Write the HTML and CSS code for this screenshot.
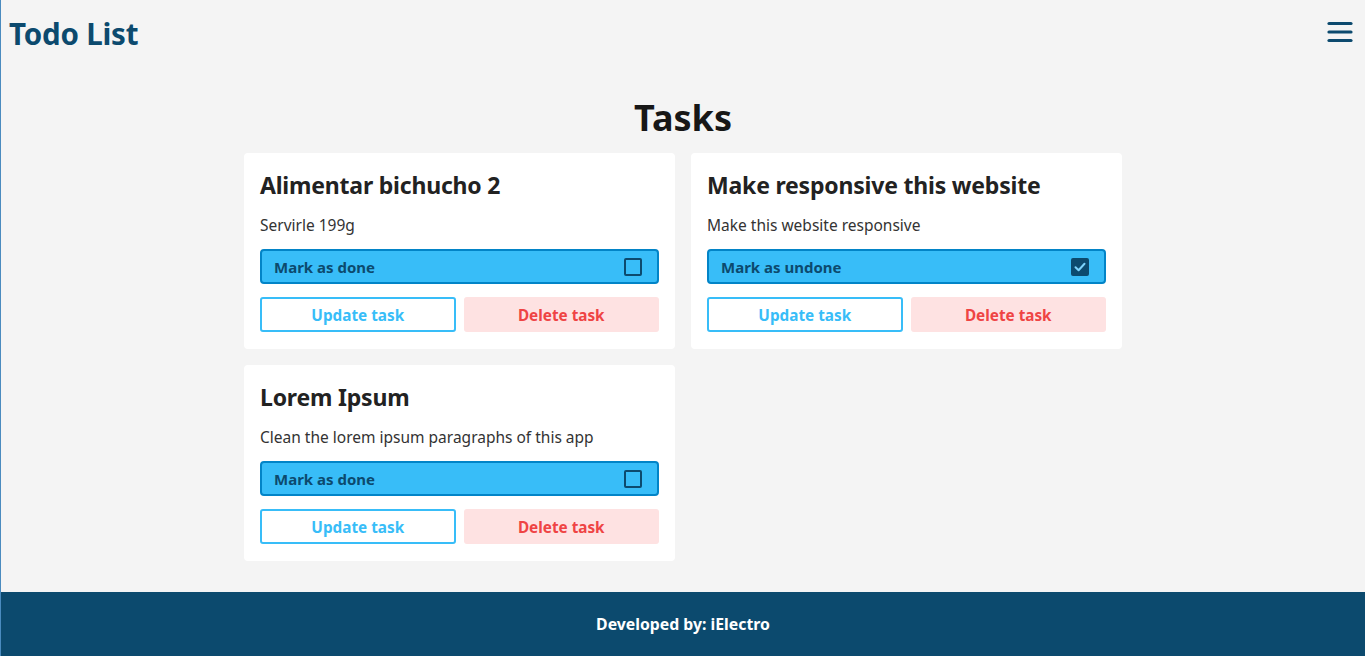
FILE: index.html
```html
<!DOCTYPE html>
<html lang="en">
<head>
<meta charset="utf-8">
<title>Todo List</title>
<link rel="stylesheet" href="styles.css">
</head>
<body>
<div class="page">
  <header class="header">
    <h1 class="logo">Todo List</h1>
    <button class="menu" aria-label="Menu">
      <svg width="26" height="22" viewBox="0 0 26 22"><g stroke="#0c4a6e" stroke-width="3.2" stroke-linecap="round"><line x1="2" y1="2.5" x2="24" y2="2.5"/><line x1="2" y1="11" x2="24" y2="11"/><line x1="2" y1="19.5" x2="24" y2="19.5"/></g></svg>
    </button>
  </header>
  <main class="main">
    <h2 class="title">Tasks</h2>
    <div class="grid">
      <div class="card">
        <h3 class="card-title">Alimentar bichucho 2</h3>
        <p class="card-desc">Servirle 199g</p>
        <label class="mark"><span>Mark as done</span><span class="check"></span></label>
        <div class="actions"><button class="btn update">Update task</button><button class="btn delete">Delete task</button></div>
      </div>
      <div class="card">
        <h3 class="card-title">Make responsive this website</h3>
        <p class="card-desc">Make this website responsive</p>
        <label class="mark"><span>Mark as undone</span><span class="check checked"><svg width="14" height="14" viewBox="0 0 14 14"><path d="M2.5 7.2 L5.6 10.2 L11.5 3.8" fill="none" stroke="#7dd3fc" stroke-width="2" stroke-linecap="round" stroke-linejoin="round"/></svg></span></label>
        <div class="actions"><button class="btn update">Update task</button><button class="btn delete">Delete task</button></div>
      </div>
      <div class="card">
        <h3 class="card-title">Lorem Ipsum</h3>
        <p class="card-desc">Clean the lorem ipsum paragraphs of this app</p>
        <label class="mark"><span>Mark as done</span><span class="check"></span></label>
        <div class="actions"><button class="btn update">Update task</button><button class="btn delete">Delete task</button></div>
      </div>
    </div>
  </main>
  <footer class="footer">Developed by: iElectro</footer>
</div>
</body>
</html>
```
FILE: styles.css
```css
* { box-sizing: border-box; }
html, body { margin: 0; padding: 0; }
body {
  font-family: "Noto Sans", "Open Sans", sans-serif;
  background: #f4f4f4;
  color: #262626;
}
.page {
  min-height: 656px;
  display: flex;
  flex-direction: column;
  border-left: 1px solid #4a8bbf;
}
.header {
  height: 66px;
  display: flex;
  align-items: center;
  justify-content: space-between;
  padding: 0 12px 0 8px;
}
.logo {
  margin: 0;
  font-size: 29.5px;
  font-weight: 700;
  color: #0c4a6e;
  letter-spacing: -0.2px;
}
.menu {
  border: 0;
  background: none;
  padding: 0;
  display: flex;
  margin-top: -2px;
}
.main {
  flex: 1;
  display: flex;
  flex-direction: column;
  align-items: center;
  padding-bottom: 31px;
}
.title {
  margin: 30px 0 13px;
  font-size: 36px;
  line-height: 44px;
  font-weight: 700;
  color: #171717;
}
.grid {
  display: grid;
  grid-template-columns: 431px 431px;
  gap: 16px;
}
.card {
  background: #fff;
  border-radius: 4px;
  padding: 16px;
  height: 196px;
}
.card-title {
  margin: 0;
  font-size: 23px;
  line-height: 32px;
  font-weight: 700;
  color: #222;
  letter-spacing: -0.2px;
}
.card-desc {
  margin: 12px 0 12px;
  font-size: 15.5px;
  line-height: 24px;
  color: #333;
}
.mark {
  display: flex;
  align-items: center;
  justify-content: space-between;
  height: 35px;
  background: #38bdf8;
  border: 2px solid #0284c7;
  border-radius: 4px;
  padding: 0 15px 0 12px;
  font-size: 15px;
  font-weight: 700;
  color: #0c4a6e;
}
.check {
  width: 18px;
  height: 18px;
  border: 2px solid #0c4a6e;
  border-radius: 2px;
  display: flex;
  align-items: center;
  justify-content: center;
}
.check.checked {
  background: #0c4a6e;
}
.actions {
  display: grid;
  grid-template-columns: 1fr 1fr;
  gap: 8px;
  margin-top: 13px;
}
.btn {
  height: 35px;
  border-radius: 3px;
  font-family: inherit;
  font-size: 15.3px;
  font-weight: 700;
  cursor: pointer;
}
.update {
  background: #fff;
  border: 2px solid #38bdf8;
  color: #38bdf8;
}
.delete {
  background: #fee2e2;
  border: 0;
  color: #ef4444;
}
.footer {
  height: 64px;
  background: #0c4a6e;
  color: #fff;
  font-weight: 700;
  font-size: 15.8px;
  display: flex;
  align-items: center;
  justify-content: center;
}
```
